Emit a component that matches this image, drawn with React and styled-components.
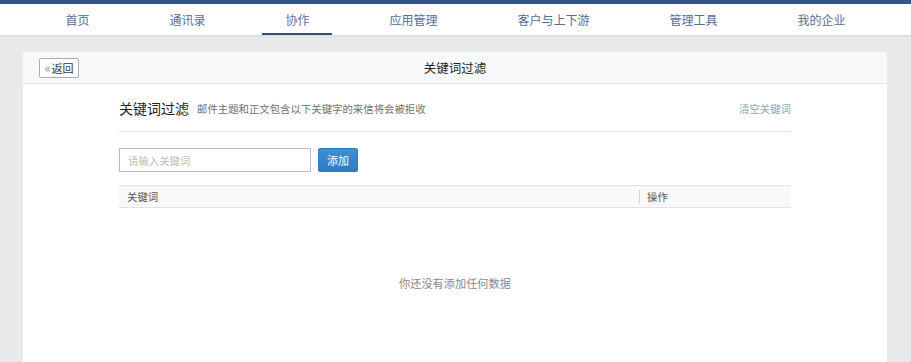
import React from 'react'
import styled, { createGlobalStyle } from 'styled-components';

const GlobalStyle = createGlobalStyle`
    html, body {
        margin: 0;
        padding: 0;
        background: #e8e9eb;
        font-family: "Noto Sans CJK SC", "Noto Sans", "Liberation Sans", sans-serif;
    }
    * {
        box-sizing: border-box;
    }
`

const navItems = ['首页', '通讯录', '协作', '应用管理', '客户与上下游', '管理工具', '我的企业'];

const App = () => {
    return(
        <>
            <GlobalStyle />
            <TopBar />
            <Nav>
                {navItems.map(item => (
                    <NavItem key={item} active={item === '协作'}>{item}</NavItem>
                ))}
            </Nav>
            <Main>
                <Card>
                    <CardHeader>
                        <div>
                            <BackButton><span>«</span>返回</BackButton>
                        </div>
                        <CardTitle>关键词过滤</CardTitle>
                        <div />
                    </CardHeader>
                    <CardBody>
                        <HeadingRow>
                            <Heading>
                                <h2>关键词过滤</h2>
                                <p>邮件主题和正文包含以下关键字的来信将会被拒收</p>
                            </Heading>
                            <ClearLink>清空关键词</ClearLink>
                        </HeadingRow>
                        <FormRow>
                            <KeywordInput placeholder='请输入关键词' />
                            <AddButton>添加</AddButton>
                        </FormRow>
                        <Table>
                            <TableHead>
                                <HeadCell>关键词</HeadCell>
                                <HeadCell divider>操作</HeadCell>
                            </TableHead>
                            <Empty>你还没有添加任何数据</Empty>
                        </Table>
                    </CardBody>
                </Card>
            </Main>
        </>
    )
};

const TopBar = styled.div`
    height: 4px;
    background: #315683;
`

const Nav = styled.div`
    height: 31px;
    background: #fff;
    display: flex;
    justify-content: center;
    box-shadow: 0 1px 2px rgba(0, 0, 0, 0.08);
`

const NavItem = styled.div`
    height: 31px;
    margin: 0 17px;
    padding: 0 23px;
    display: flex;
    align-items: center;
    font-size: 12px;
    color: ${props => props.active ? '#62709a' : '#566d90'};
    border-bottom: 2px solid ${props => props.active ? '#2f5080' : 'transparent'};
    padding-top: 2px;
    cursor: pointer;
`

const Main = styled.div`
    padding: 17px 24px 0 23px;
`

const Card = styled.div`
    background: #fff;
    border-radius: 3px 3px 0 0;
    height: 310px;
    overflow: hidden;
`

const CardHeader = styled.div`
    height: 32px;
    background: #f8f9fb;
    border-bottom: 1px solid #e0e3e8;
    display: grid;
    grid-template-columns: 1fr auto 1fr;
    align-items: center;
    padding: 0 16px;
`

const BackButton = styled.button`
    width: 40px;
    height: 20px;
    padding: 0;
    border: 1px solid #a9adb3;
    border-radius: 2px;
    background: #fff;
    font-family: inherit;
    font-size: 11px;
    color: #333;
    display: flex;
    align-items: center;
    justify-content: center;
    margin-top: 1px;

    span {
        color: #999;
        font-size: 13px;
        line-height: 1;
        margin-right: 1px;
        margin-top: -2px;
    }
`

const CardTitle = styled.div`
    font-size: 12.5px;
    color: #222;
`

const CardBody = styled.div`
    padding: 12px 96px 0;
`

const HeadingRow = styled.div`
    display: flex;
    justify-content: space-between;
    align-items: center;
    height: 24px;
    box-sizing: content-box;
    padding-bottom: 11px;
    border-bottom: 1px solid #dedfe1;
`

const Heading = styled.div`
    display: flex;
    align-items: center;

    h2 {
        margin: 0;
        font-size: 14px;
        font-weight: normal;
        color: #1e1e1e;
    }
    p {
        margin: 0 0 0 8px;
        font-size: 10.4px;
        color: #707070;
        padding-top: 1px;
    }
`

const ClearLink = styled.a`
    font-size: 10.4px;
    color: #8aa5c4;
    cursor: pointer;
    white-space: nowrap;
`

const FormRow = styled.div`
    display: flex;
    gap: 7px;
    margin-top: 16px;
`

const KeywordInput = styled.input`
    width: 192px;
    height: 24px;
    border: 1px solid #b5bcc6;
    padding: 0 8px;
    font-family: inherit;
    font-size: 10.4px;
    outline: none;

    &::placeholder {
        color: #bbbbbb;
    }
`

const AddButton = styled.button`
    width: 40px;
    height: 24px;
    border: 1px solid #2f79bf;
    border-radius: 2px;
    background: linear-gradient(#3e8fd4, #2f7cc4);
    color: #fff;
    font-family: inherit;
    font-size: 11px;
    padding: 0;
`

const Table = styled.div`
    margin-top: 13px;
`

const TableHead = styled.div`
    display: grid;
    grid-template-columns: 520px 1fr;
    height: 23px;
    background: #f9f9f9;
    border-top: 1px solid #e3e3e3;
    border-bottom: 1px solid #e3e3e3;
    align-items: center;
`

const HeadCell = styled.div`
    font-size: 10.4px;
    color: #555;
    padding-left: ${props => props.divider ? '7px' : '8px'};
    border-left: ${props => props.divider ? '1px solid #d4d4d4' : 'none'};
    line-height: 13px;
`

const Empty = styled.div`
    padding-top: 67px;
    text-align: center;
    font-size: 11.2px;
    line-height: 16px;
    color: #888;
`

export default App;
